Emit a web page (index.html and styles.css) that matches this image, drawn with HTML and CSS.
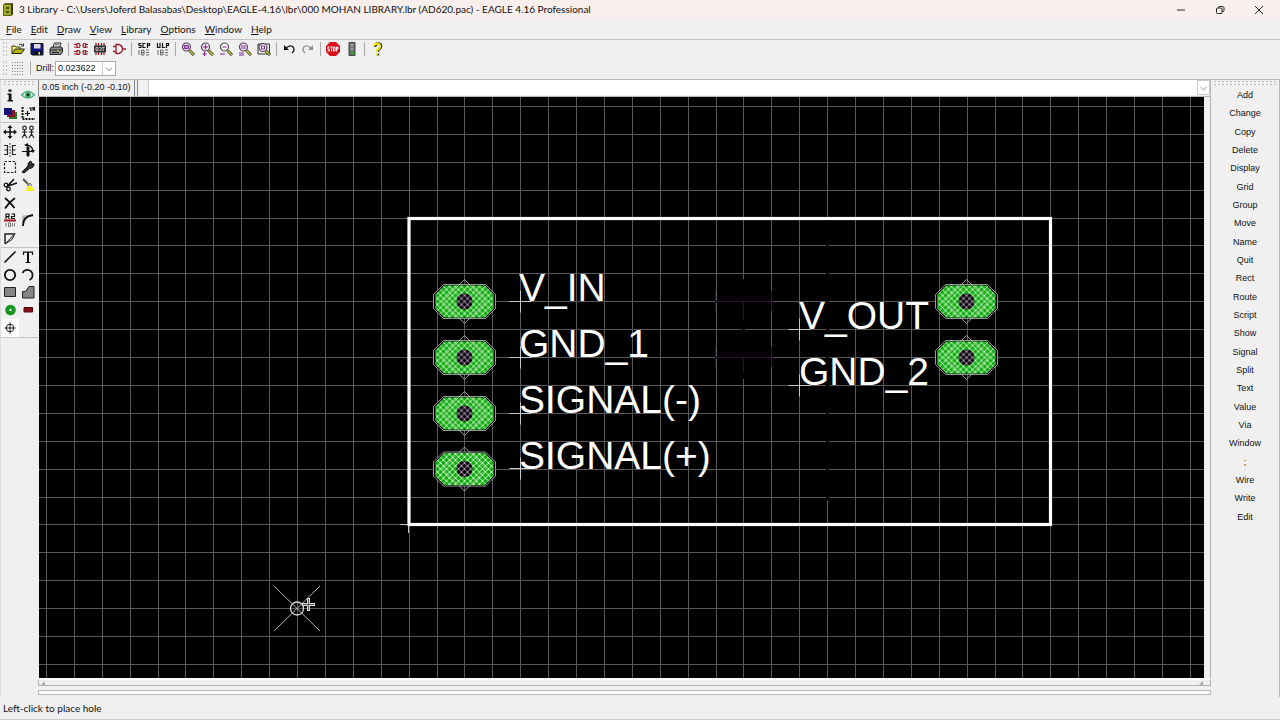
FILE: index.html
```
<!DOCTYPE html>
<html lang="en">
<head>
    <meta charset="UTF-8">
    <title>3 Library - EAGLE 4.16 Professional</title>
    <link rel="stylesheet" href="styles.css">
</head>
<body>

    <header class="titlebar">
        <svg class="app-icon" viewBox="0 0 12 14"><path d="M1 2l2-2h8v11l-2 2H1z" fill="#5d6310"/><path d="M2 2h7v10H2z" fill="#a6ac22"/><path d="M9 2l2-2v11l-2 2z" fill="#33370b"/><path d="M4 4h3v2H4zM4 8h3v2H4z" fill="#4b5010"/></svg>
        <h1>3 Library - C:\Users\Joferd Balasabas\Desktop\EAGLE-4.16\lbr\000 MOHAN LIBRARY.lbr (AD620.pac) - EAGLE 4.16 Professional</h1>
        <div class="win-buttons">
            <button aria-label="Minimize"><svg viewBox="0 0 10 10"><path d="M1 5h8"/></svg></button>
            <button aria-label="Restore"><svg viewBox="0 0 10 10"><rect x="1.5" y="3" width="5.5" height="5.5" rx="1"/><path d="M3.500 3V2.500q0-1 1-1H7.500q1.500 0 1.500 1.500V5.500q0 1-1 1H7"/></svg></button>
            <button aria-label="Close"><svg viewBox="0 0 10 10"><path d="M1 1l8 8M9 1l-8 8"/></svg></button>
        </div>
    </header>

    <nav class="menubar">
        <a href="#"><u>F</u>ile</a>
        <a href="#"><u>E</u>dit</a>
        <a href="#"><u>D</u>raw</a>
        <a href="#"><u>V</u>iew</a>
        <a href="#"><u>L</u>ibrary</a>
        <a href="#"><u>O</u>ptions</a>
        <a href="#"><u>W</u>indow</a>
        <a href="#"><u>H</u>elp</a>
    </nav>

    <div class="toolbar">
        <span class="grip"></span>
        <button aria-label="Open"><svg viewBox="0 0 14 14"><path d="M1 11.500V4h3l1 1h4v2" fill="#ffff80" stroke="#333300"/><path d="M1 11.500L4 7h9.500l-3 4.500z" fill="#b5b500" stroke="#222"/><path d="M8 2.500q2-1.500 4 1M12.500 1.500v2.500H10" fill="none" stroke="#333"/></svg></button>
        <button aria-label="Save"><svg viewBox="0 0 14 14"><path d="M1 1.500h12v11.500H2l-1-1z" fill="#14148a" stroke="#111"/><path d="M4 2h6.500v4.500H4z" fill="#dcdcdc"/><path d="M4 9h7v4H4z" fill="#111"/><path d="M8.500 10h1.500v2.500H8.500z" fill="#ddd"/></svg></button>
        <button aria-label="Print"><svg viewBox="0 0 14 14"><path d="M4 5l1.500-4H12l-1.500 4" fill="#fff" stroke="#222"/><path d="M1 6.500L3 5h9.500l1 1.500V10l-2 2.500H1z" fill="#8d8d8d" stroke="#222"/><path d="M1 8h10.500l2-2M3 10.500h7" fill="none" stroke="#222"/><path d="M6 2.500h4M6 4h3.500" stroke="#888"/><path d="M8 9h2" stroke="#d7d700"/></svg></button>
        <span class="sep"></span>
        <button aria-label="Edit device"><svg viewBox="0 0 14 14"><g fill="none" stroke="#9b1c26" stroke-width="1.200"><path d="M3 1.500h2q2 2 0 4H3zM3 8.500h2q2 2 0 4H3zM10 1.500h1.500v4H10q-2-2 0-4zM10 8.500h1.500v4H10q-2-2 0-4z"/><path d="M0 2.500h3M0 5h3M0 9.500h3M0 12h3M11 2.500h3M11 5h3M11 9.500h3M11 12h3"/></g></svg></button>
        <button aria-label="Edit package"><svg viewBox="0 0 14 14"><path d="M3 1v12M5.500 1v12M8.500 1v12M11 1v12" stroke="#9b1c26" stroke-width="1.300"/><path d="M1 3.500h12v7H1z" fill="#333"/><path d="M3 5.500h2v3H3zM6.500 5.500H8v3H6.500M9 5.500h2.500M10.200 5.500v3.500" fill="none" stroke="#ddd" stroke-width=".8"/></svg></button>
        <button aria-label="Edit symbol"><svg viewBox="0 0 14 14"><path d="M4 2.500h2.500q4 1 4 4.500t-4 4.500H4zM1 4.500h3M1 9.500h3M10.500 7H14" fill="none" stroke="#9b1c26" stroke-width="1.300"/></svg></button>
        <span class="sep"></span>
        <button aria-label="Run script"><svg viewBox="0 0 14 14"><path d="M4.500 1.500H2v2h2v2H1.500M8.500 1.500H6v4h2.500M10.500 6V1.500h2v2h-2" fill="none" stroke="#111" stroke-width="1.200"/><path d="M2 8v5M4.500 8H7M4.500 10.500H7M4.500 8v5H7V8M9 8h3M9 10.500h3M9 13h3" fill="none" stroke="#666"/></svg></button>
        <button aria-label="Run ULP"><svg viewBox="0 0 14 14"><path d="M1.500 1v4.500h2.500V1M6.500 1v4.500h2.500M10.500 6V1.500h2v2h-2" fill="none" stroke="#111" stroke-width="1.200"/><path d="M2 8v5M4.500 8H7M4.500 10.500H7M4.500 8v5H7V8M9 8h3M9 10.500h3M9 13h3" fill="none" stroke="#666"/></svg></button>
        <span class="sep"></span>
        <button aria-label="Zoom fit"><svg viewBox="0 0 14 14"><path d="M8.500 8.500l4.500 4.500" stroke="#333" stroke-width="3"/><path d="M8.500 8.500l4.200 4.200" stroke="#c9c92c" stroke-width="1.500"/><circle cx="5.500" cy="5" r="4" fill="#eee5f2" stroke="#55405c" stroke-width="1.200"/><path d="M3.500 3.500h4v3h-4z" fill="#bd92c9" stroke="#803090"/></svg></button>
        <button aria-label="Zoom in"><svg viewBox="0 0 14 14"><path d="M8.500 8.500l4.500 4.500" stroke="#333" stroke-width="3"/><path d="M8.500 8.500l4.200 4.200" stroke="#c9c92c" stroke-width="1.500"/><circle cx="5.500" cy="5" r="4" fill="#f5eef7" stroke="#55405c" stroke-width="1.200"/><path d="M3 5h5M5.500 2.500v5M2.500 12h4M4.500 10v4" stroke="#8b209b" stroke-width="1.200"/></svg></button>
        <button aria-label="Zoom out"><svg viewBox="0 0 14 14"><path d="M8.500 8.500l4.500 4.500" stroke="#333" stroke-width="3"/><path d="M8.500 8.500l4.200 4.200" stroke="#c9c92c" stroke-width="1.500"/><circle cx="5.500" cy="5" r="4" fill="#f7f4f7" stroke="#555" stroke-width="1.200"/><path d="M3.500 5h4M1 12h5" stroke="#8b209b" stroke-width="1.200"/></svg></button>
        <button aria-label="Redraw"><svg viewBox="0 0 14 14"><path d="M8.500 8.500l4.500 4.500" stroke="#333" stroke-width="3"/><path d="M8.500 8.500l4.200 4.200" stroke="#c9c92c" stroke-width="1.500"/><circle cx="5.500" cy="5" r="4" fill="#f5eef7" stroke="#55405c" stroke-width="1.200"/><path d="M3 4h5M3 6h5M1 11h5M1 13h5" stroke="#8b209b"/></svg></button>
        <button aria-label="Zoom select"><svg viewBox="0 0 14 14"><path d="M1 2h11.500v10H1z" fill="none" stroke="#333"/><path d="M8.500 8.500l4.500 4.500" stroke="#333" stroke-width="3"/><path d="M8.500 8.500l4.200 4.200" stroke="#c9c92c" stroke-width="1.500"/><circle cx="6" cy="5.500" r="4" fill="#eee5f2" stroke="#55405c" stroke-width="1.200"/><path d="M4.500 4h3v3h-3z" fill="#fff" stroke="#803090"/></svg></button>
        <span class="sep"></span>
        <button aria-label="Undo"><svg viewBox="0 0 14 14"><path d="M2 3v5h5z" fill="#111"/><path d="M4 6q5-4 7.500-.5Q13 8.500 10 11" fill="none" stroke="#111" stroke-width="1.300"/></svg></button>
        <button aria-label="Redo"><svg viewBox="0 0 14 14"><path d="M12 3v5H7z" fill="#8e8e8e"/><path d="M10 6Q5 2 2.500 5.500 1 8.500 4 11" fill="none" stroke="#8e8e8e" stroke-width="1.300"/></svg></button>
        <span class="sep"></span>
        <button aria-label="Stop"><svg viewBox="0 0 14 14"><path d="M4 0h6l4 4v6l-4 4H4l-4-4V4z" fill="#dc0f1b"/><path d="M3.500 5H1.800v2h1.500v2H1.500M4.500 5h2.200M5.600 5v4.500M7.500 5H9v4H7.500zM10.500 9.500V5H12v2h-1.500" fill="none" stroke="#fff"/></svg></button>
        <button aria-label="Go"><svg viewBox="0 0 14 14"><path d="M4 .5h6v13H4z" fill="#6a716b" stroke="#444"/><circle cx="7" cy="3" r="1.500" fill="#999"/><circle cx="7" cy="7" r="1.500" fill="#999"/><circle cx="7" cy="11" r="1.500" fill="#23a52d"/></svg></button>
        <span class="sep"></span>
        <button aria-label="Help"><svg viewBox="0 0 14 14"><path d="M5 5q0-3.500 3-3.500t3 3Q11 6 8 8v2M8 11.500v2" fill="none" stroke="#222" stroke-width="2.600"/><path d="M4 4.500q0-3 3-3t3.200 3Q10.200 6 7.200 8v2M7.200 11.200v2" fill="none" stroke="#f2f200" stroke-width="2"/></svg></button>
    </div>

    <div class="toolbar params">
        <span class="grip"></span>
        <button aria-label="Grid"><svg viewBox="0 0 14 14"><path d="M1 1.500h12M1 4.500h12M1 7.500h12M1 10.500h12M1 13.500h12" stroke="#777" stroke-dasharray="1 1.500"/></svg></button>
        <span class="sep"></span>
        <label for="drill">Drill:</label>
        <span class="combo">
            <select id="drill"><option>0.023622</option></select>
            <svg viewBox="0 0 14 14"><path d="M3.500 6L7 9.500 10.500 6"/></svg>
        </span>
    </div>

    <main>
        <aside class="tools">
            <span class="grip-h"></span>
            <div class="group g2">
                <button aria-label="Info"><svg viewBox="0 0 14 14"><path d="M5.500 1.500h3v2.200h-3zM4.500 5.500h4V12H10v1.500H4.500V12h1.200V7H4.500z" fill="#111"/></svg></button>
                <button aria-label="Show"><svg viewBox="0 0 14 14"><path d="M.5 7Q7-.5 13.500 7 7 13 .5 7z" fill="#d5f5e2" stroke="#49a878" stroke-width="1.200"/><circle cx="7" cy="6.800" r="2.800" fill="#35a56c"/><circle cx="7" cy="6.800" r="1.200" fill="#111"/></svg></button>
                <button aria-label="Display"><svg viewBox="0 0 14 14"><path d="M6 6h8v7H6z" fill="#27782b"/><path d="M4 4h8v7H4z" fill="#8c1228"/><path d="M1 2h8v7H1z" fill="#14147d"/></svg></button>
                <button aria-label="Mark"><svg viewBox="0 0 14 14"><path d="M1.500 1v12H14" fill="none" stroke="#111" stroke-width="2" stroke-dasharray="2 1"/><path d="M4 7.500h5M6.500 5v5M8 2h2v3M12 1.500h1.500V4H12z" fill="none" stroke="#111" stroke-width="1.200"/></svg></button>
            </div>
            <div class="group g7">
                <button aria-label="Move"><svg viewBox="0 0 14 14"><path d="M7 2v10M2 7h10" stroke="#111" stroke-width="1.500"/><path d="M7 0l2.500 3h-5zM7 14l2.500-3h-5zM0 7l3-2.500v5zM14 7l-3-2.500v5z" fill="#111"/></svg></button>
                <button aria-label="Copy"><svg viewBox="0 0 14 14"><g fill="none" stroke="#222" stroke-width="1.200"><circle cx="3.500" cy="3" r="1.800"/><circle cx="10.500" cy="3" r="1.800"/><path d="M3.500 5v4L1 13M3.500 9L6 13M1 7h5M10.500 5v4L8 13M10.500 9l2.500 4M8 7h5"/></g></svg></button>
                <button aria-label="Mirror"><svg viewBox="0 0 14 14"><path d="M1 2.500h3.500v9H1M1.500 7h3M13 2.500H9.500v9H13M12.500 7h-3" fill="none" stroke="#222" stroke-width="1.200"/><path d="M7 0v14" stroke="#444" stroke-dasharray="2 1"/></svg></button>
                <button aria-label="Rotate"><svg viewBox="0 0 14 14"><path d="M6 4h2v9H6zM1 8.500h12" fill="#111" stroke="#111"/><path d="M5 2q6 0 7 6" fill="none" stroke="#111" stroke-width="1.300"/><path d="M3 2l4-2v4zM9.500 7H14l-2 3z" fill="#111"/></svg></button>
                <button aria-label="Group"><svg viewBox="0 0 14 14"><path d="M1.500 1.500h11v11h-11z" fill="none" stroke="#222" stroke-width="1.200" stroke-dasharray="2.500 1.500"/></svg></button>
                <button aria-label="Change"><svg viewBox="0 0 14 14"><path d="M1 12l6-6q-.5-4 3-5l.5 2.500 2.500.5q0 4-4.500 4.500L3 13z" fill="#333" stroke="#111"/></svg></button>
                <button aria-label="Cut"><svg viewBox="0 0 14 14"><path d="M5 7.500L11 1M5 8l9-3" stroke="#111" stroke-width="1.600"/><circle cx="3" cy="7" r="1.800" fill="none" stroke="#111" stroke-width="1.300"/><circle cx="5.500" cy="11" r="1.800" fill="none" stroke="#111" stroke-width="1.300"/></svg></button>
                <button aria-label="Paste"><svg viewBox="0 0 14 14"><path d="M2 1l6 6" stroke="#555" stroke-width="2"/><path d="M7 5l4 4 3 4H5l1-3z" fill="#f1f11c"/><path d="M6 8l3-3 2 3" fill="#bbb" stroke="#777"/></svg></button>
                <button aria-label="Delete"><svg viewBox="0 0 14 14"><path d="M2 2q5 4 9.500 10M12 2Q6 6 2 12.500" fill="none" stroke="#111" stroke-width="1.800"/></svg></button>
                <span></span>
                <button aria-label="Name"><svg viewBox="0 0 14 14"><path d="M3 6V1h3v2.500H3M4.500 3.500L6.500 6M8.500 1h3v2.500h-3V5.500h3.500" fill="none" stroke="#111" stroke-width="1.200"/><path d="M1 7.500h12" stroke="#a51522" stroke-width="2"/><path d="M3 10v3.500M5.500 10h2v3.500h-2zM9.500 10v3.500M11.500 10v3.500" fill="none" stroke="#777"/></svg></button>
                <button aria-label="Miter"><svg viewBox="0 0 14 14"><path d="M2 13V3h10" fill="none" stroke="#999"/><path d="M2 13Q2 3 12 2" fill="none" stroke="#111" stroke-width="1.800"/></svg></button>
                <button aria-label="Split"><svg viewBox="0 0 14 14"><path d="M2 13V3h10" fill="none" stroke="#222" stroke-width="1.500"/><path d="M2 13L12 2.500 9 8.500z" fill="#ddd" stroke="#222"/></svg></button>
            </div>
            <div class="group g5">
                <button aria-label="Wire"><svg viewBox="0 0 14 14"><path d="M1.500 12.500l11-11" stroke="#111" stroke-width="1.600"/></svg></button>
                <button aria-label="Text"><svg viewBox="0 0 14 14"><path d="M2.500 5V2.200h9V5M4.500 12.500h5" fill="none" stroke="#111" stroke-width="1.200"/><path d="M7 2v10.500" stroke="#111" stroke-width="2"/></svg></button>
                <button aria-label="Circle"><svg viewBox="0 0 14 14"><circle cx="7" cy="7" r="5.200" fill="none" stroke="#111" stroke-width="1.800"/></svg></button>
                <button aria-label="Arc"><svg viewBox="0 0 14 14"><path d="M1.500 5A5.300 5.300 0 1 1 8.500 12" fill="none" stroke="#111" stroke-width="1.800"/></svg></button>
                <button aria-label="Rect"><svg viewBox="0 0 14 14"><path d="M1.500 2.500h11v9h-11z" fill="#858585" stroke="#222"/></svg></button>
                <button aria-label="Polygon"><svg viewBox="0 0 14 14"><path d="M1.500 13V6.500h3L8 1.500h5V13z" fill="#858585" stroke="#222"/></svg></button>
                <button aria-label="Pad"><svg viewBox="0 0 14 14"><circle cx="7.500" cy="7" r="5.300" fill="#169520"/><circle cx="7.500" cy="7" r="1.200" fill="#e8f5e8"/></svg></button>
                <button aria-label="Smd"><svg viewBox="0 0 14 14"><path d="M3 4.500h8.500v4.500H3z" fill="#851018" stroke="#4c090d"/></svg></button>
                <button class="active" aria-label="Hole"><svg viewBox="0 0 14 14"><circle cx="7" cy="7" r="3.800" fill="none" stroke="#222"/><path d="M7 1.500v11M1.500 7h11" stroke="#222"/></svg></button>
            </div>
        </aside>

        <section class="editor">
            <div class="command">
                <span class="coords">0.05 inch (-0.20 -0.10)</span>
                <span class="notch"></span>
                <input type="text" aria-label="Command line">
                <button aria-label="History"><svg viewBox="0 0 14 14"><path d="M3.500 6L7 9.500 10.500 6"/></svg></button>
            </div>

            <div class="canvas">
                <svg>
                    <defs>
                        <!-- ten grid steps per tile, 27.9px each -->
                        <pattern id="grid" x="7" y="9" width="279" height="279" patternUnits="userSpaceOnUse">
                            <path d="M0 .5H279M0 28.500H279M0 56.500H279M0 84.500H279M0 112.500H279M0 139.500H279M0 167.500H279M0 195.500H279M0 223.500H279M0 251.500H279M.5 0V279M28.500 0V279M56.500 0V279M84.500 0V279M112.500 0V279M139.500 0V279M167.500 0V279M195.500 0V279M223.500 0V279M251.500 0V279" stroke="#585858"/>
                        </pattern>
                        <pattern id="hatch" width="6" height="6" patternUnits="userSpaceOnUse">
                            <path d="M0 0l6 6M6 0L0 6" stroke="#c4f2be"/>
                        </pattern>
                        <pattern id="drillHatch" width="6" height="6" patternUnits="userSpaceOnUse">
                            <path d="M0 0l6 6M6 0L0 6" stroke="#b79abf"/>
                        </pattern>
                        <g id="pad">
                            <path d="M-21-17H21L31-7V7L21 17H-21L-31 7V-7z" fill="#000" stroke="#bbb" stroke-width=".8"/>
                            <path d="M-20-16H20L29-7V7L20 16H-20L-29 7V-7z" fill="#12ac12"/>
                            <path d="M-20-16H20L29-7V7L20 16H-20L-29 7V-7z" fill="url(#hatch)"/>
                            <path d="M-22 0L0-22 22 0 0 22z" fill="none" stroke="#b9c9b9" stroke-width=".8"/>
                            <circle r="8" fill="#000"/>
                            <circle r="8" fill="url(#drillHatch)"/>
                        </g>
                        <path id="origin" d="M-11 0H11M0-11V11" stroke="#c8c8c8"/>
                    </defs>
                    <rect width="100%" height="100%" fill="url(#grid)"/>

                    <path d="M788.500 123V404" stroke="#000" stroke-width="3"/>
                    <path d="M704.500 182V282M676 204.500H734M676 260.500H734" stroke="#000" stroke-width="3"/>
                    <path d="M676 204.500H734M676 260.500H734M704.500 204V222M704.500 260V276M676.500 194V214M732.500 194V214M676.500 250V270M732.500 250V270" stroke="#30103a"/>

                    <path d="M361 427.500H378M369.500 419V436" stroke="#c8c8c8"/>
                    <rect x="370" y="121.500" width="641.500" height="306" fill="none" stroke="#fff" stroke-width="3.200"/>

                    <use href="#pad" x="425.500" y="204.500"/>
                    <use href="#pad" x="425.500" y="260.500"/>
                    <use href="#pad" x="425.500" y="316.500"/>
                    <use href="#pad" x="425.500" y="372"/>
                    <use href="#pad" x="927.500" y="204.500"/>
                    <use href="#pad" x="927.500" y="260.500"/>

                    <use href="#origin" x="481.500" y="204.500"/>
                    <use href="#origin" x="481.500" y="260.500"/>
                    <use href="#origin" x="481.500" y="316.500"/>
                    <use href="#origin" x="481.500" y="371.500"/>
                    <use href="#origin" x="760.500" y="232.500"/>
                    <use href="#origin" x="760.500" y="288.500"/>

                    <g class="silk">
                        <text x="480" y="204">V_IN</text>
                        <text x="480" y="260">GND_1</text>
                        <text x="480" y="316">SIGNAL(-)</text>
                        <text x="480" y="372">SIGNAL(+)</text>
                        <text x="760" y="232">V_OUT</text>
                        <text x="760" y="288">GND_2</text>
                    </g>

                    <g fill="none" stroke="#d8d8d8">
                        <path d="M235 489L281 534M281 489L235 534" stroke="#b5b5b5"/>
                        <circle cx="258" cy="511.500" r="6.500" stroke-width="1.300"/>
                    </g>
                    <path d="M269.500 501v13M263 507.500h13" stroke="#ddd" stroke-width="3"/>
                    <path d="M269.500 502v11M264 507.500h11" stroke="#555"/>
                </svg>
            </div>
            <div class="hscroll"><i></i><i></i></div>
            <div class="slider"></div>
        </section>

        <aside class="actions">
            <span class="grip-h"></span>
            <div class="action-list">
                <button>Add</button>
                <button>Change</button>
                <button>Copy</button>
                <button>Delete</button>
                <button>Display</button>
                <button>Grid</button>
                <button>Group</button>
                <button>Move</button>
                <button>Name</button>
                <button>Quit</button>
                <button>Rect</button>
                <button>Route</button>
                <button>Script</button>
                <button>Show</button>
                <button>Signal</button>
                <button>Split</button>
                <button>Text</button>
                <button>Value</button>
                <button>Via</button>
                <button>Window</button>
                <button>;</button>
                <button>Wire</button>
                <button>Write</button>
                <button>Edit</button>
            </div>
        </aside>
    </main>

    <footer class="status">Left-click to place hole</footer>

</body>
</html>
```
FILE: styles.css
```
*{
    margin: 0;
    padding: 0;
    box-sizing: border-box;
}

body{
    height: 100vh;
    display: flex;
    flex-direction: column;
    background-color: #f0f0f0;
    color: #111;
    font-family: Lato, "Open Sans", sans-serif;
    font-size: 10px;
    overflow: hidden;
}

button{
    display: flex;
    align-items: center;
    justify-content: center;
    border: none;
    background: none;
    color: inherit;
    font: inherit;
}

.titlebar{
    height: 19px;
    flex: none;
    display: flex;
    align-items: center;
    background-color: #f9efec;
}

.app-icon{
    width: 12px;
    height: 14px;
    margin: 0 5px 0 2px;
}

.titlebar h1{
    flex: 1;
    font-size: 10px;
    font-weight: normal;
    line-height: 19px;
    white-space: nowrap;
}

.win-buttons{
    display: flex;
    padding-right: 2px;
}

.win-buttons button{
    width: 39px;
    height: 19px;
}

.win-buttons svg{
    width: 10px;
    height: 10px;
    fill: none;
    stroke: #222;
}

.menubar{
    height: 20px;
    flex: none;
    display: flex;
    gap: 9px;
    padding: 0 6px;
    line-height: 20px;
}

.menubar a{
    color: inherit;
    text-decoration: none;
}

.toolbar{
    height: 20px;
    flex: none;
    display: flex;
    align-items: center;
    border-top: 1px solid #c4c4c4;
    padding-left: 2px;
    padding-bottom: 1px;
}

.toolbar button{
    width: 19px;
    height: 18px;
}

.toolbar button svg,
.tools button svg{
    width: 14px;
    height: 14px;
}

.toolbar .sep{
    width: 1px;
    height: 14px;
    margin: 0 2px 0 3px;
    background-color: #a8a8a8;
}

.grip{
    width: 6px;
    height: 16px;
    background-image: radial-gradient(circle, #bbb 1px, transparent 1px);
    background-size: 3px 4px;
}

.grip-h{
    display: block;
    height: 6px;
    margin: 0 2px;
    background-image: radial-gradient(circle, #bbb 1px, transparent 1px);
    background-size: 4px 3px;
}

.toolbar.params{
    border-top-color: transparent;
    padding-bottom: 3px;
    font-family: "Liberation Sans", Arial, sans-serif;
    font-size: 9px;
}

.params label{
    margin: 0 1px 0 3px;
}

.combo{
    display: grid;
    width: 61px;
    height: 15px;
    border: 1px solid #aaa;
    background-color: #fff;
}

.combo select,
.combo svg{
    grid-area: 1 / 1;
}

.combo select{
    appearance: none;
    border: none;
    background: none;
    padding-left: 2px;
    font-family: inherit;
    font-size: 9px;
    color: inherit;
}

.combo svg{
    justify-self: end;
    width: 13px;
    height: 13px;
    border-left: 1px solid #ccc;
    pointer-events: none;
}

.combo svg,
.command svg{
    fill: none;
    stroke: #777;
}

main{
    flex: 1;
    min-height: 0;
    display: grid;
    grid-template-columns: 38px 1fr 69px;
    border-top: 1px solid #b8b8b8;
}

.tools{
    border-left: 1px solid #ddd;
}

.tools .group{
    display: grid;
    grid-template-columns: 18px 18px;
    grid-auto-rows: 1fr;
    border-bottom: 1px solid #c4c4c4;
}

.tools .g2{
    height: 37px;
}

.tools .g7{
    height: 125px;
}

.tools .g5{
    height: 90px;
}

.tools .active{
    background-color: #fff;
}

.editor{
    display: flex;
    flex-direction: column;
    min-width: 0;
    padding-bottom: 2px;
}

.command{
    height: 17px;
    flex: none;
    display: flex;
    border-bottom: 1px solid #b8b8b8;
    border-right: 1px solid #b8b8b8;
    font-family: "Liberation Sans", Arial, sans-serif;
    font-size: 9px;
}

.coords{
    width: 97px;
    padding-left: 3px;
    border-left: 1px solid #888;
    border-right: 1px solid #888;
    line-height: 15px;
    white-space: nowrap;
}

.notch{
    width: 12px;
    margin-left: 2px;
    border-left: 1px solid #888;
    border-right: 1px solid #ccc;
}

.command input{
    flex: 1;
    min-width: 0;
    height: 15px;
    border: none;
    background-color: #fff;
    font: inherit;
}

.command button{
    width: 13px;
    height: 15px;
    border: 1px solid #ccc;
    background-color: #fff;
}

.command button svg{
    width: 12px;
    height: 12px;
}

.canvas{
    flex: 1;
    min-height: 0;
    margin-left: 1px;
    padding-right: 6px;
    border-right: 1px solid #b0b0b0;
}

.canvas svg{
    display: block;
    width: 100%;
    height: 100%;
    background-color: #000;
}

.silk{
    fill: #fff;
    font-family: "Liberation Sans", Arial, sans-serif;
    font-size: 39px;
}

.hscroll{
    height: 8px;
    flex: none;
    display: flex;
    justify-content: space-between;
    align-items: flex-end;
    padding: 0 7px 0 2px;
    border: 1px solid #b0b0b0;
    border-top: 2px solid #fff;
}

.hscroll i{
    width: 4px;
    height: 4px;
    background-color: #aaa;
    clip-path: polygon(0 100%, 100% 0, 100% 100%);
}

.slider{
    height: 5px;
    flex: none;
    margin-top: 4px;
    border: 1px solid #b8b8b8;
    background-color: #fafafa;
}

.actions{
    border-right: 1px solid #b8b8b8;
}

.action-list{
    display: flex;
    flex-direction: column;
    height: 440px;
    font-family: "Liberation Sans", Arial, sans-serif;
    font-size: 9px;
}

.action-list button{
    flex: 1;
}

.status{
    height: 23px;
    flex: none;
    padding-left: 3px;
    border-bottom: 1px solid #ccc;
    line-height: 22px;
}
```
